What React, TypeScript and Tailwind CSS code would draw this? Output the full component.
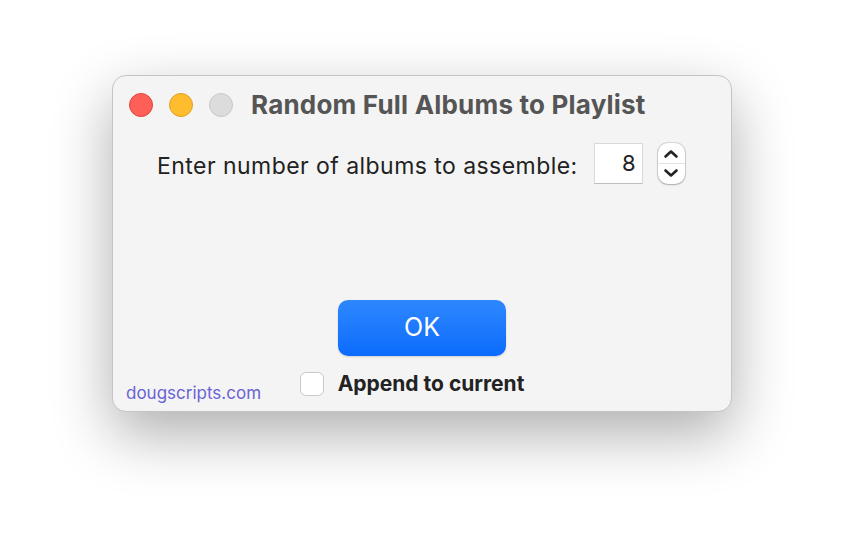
const font = { fontFamily: '"Inter", "Liberation Sans", sans-serif' };

function TrafficLights() {
  return (
    <div className="flex items-center gap-4">
      <span className="h-6 w-6 rounded-full border border-[#e0443e] bg-[#fe5f57]" />
      <span className="h-6 w-6 rounded-full border border-[#dea123] bg-[#febc2e]" />
      <span className="h-6 w-6 rounded-full border border-[#c8c8c8] bg-[#dcdcdc]" />
    </div>
  );
}

// stepper arrow, flipped for down
function Caret({ down }: { down?: boolean }) {
  return (
    <svg width="16" height="10" viewBox="0 0 16 10" className={down ? "rotate-180" : ""}>
      <path d="M2.5 7.5 L8 2.5 L13.5 7.5" fill="none" stroke="#222" strokeWidth="2.6" strokeLinecap="round" strokeLinejoin="round" />
    </svg>
  );
}

export default function App() {
  return (
    <div className="flex h-[560px] w-[844px] justify-center bg-white pt-[75px]" style={font}>
      <div className="flex h-[337px] w-[620px] flex-col rounded-[14px] border border-[#c4c4c4] bg-[#f4f4f4] shadow-[0_22px_60px_rgba(0,0,0,0.32)]">
        <div className="flex h-[56px] items-center pl-[16px] pt-[1px]">
          <TrafficLights />
          <h1 className="ml-[18px] text-[26px] font-bold tracking-[0.2px] text-[#555555]">
            Random Full Albums to Playlist
          </h1>
        </div>

        <div className="mt-[11px] flex items-center pl-[44px]">
          <span className="pt-[6px] text-[23px] tracking-[0.45px] text-[#222222]">Enter number of albums to assemble:</span>
          <div className="ml-[16px] flex h-[41px] w-[49px] items-center justify-end border border-[#d9d9d9] border-b-[#bdbdbd] bg-white pr-[6px] text-[22px] text-[#222222]">
            8
          </div>
          <div className="ml-[15px] flex h-[41px] w-[27px] flex-col items-center justify-center gap-[4px] rounded-[10px] bg-white shadow-[0_0_0_1px_rgba(0,0,0,0.12),0_1px_2px_rgba(0,0,0,0.2)]">
            <Caret />
            <span className="h-px w-full bg-[#e2e2e2]" />
            <Caret down />
          </div>
        </div>

        <div className="mt-[116px] flex justify-center">
          <button className="flex h-[56px] w-[168px] items-center justify-center rounded-[10px] bg-gradient-to-b from-[#2d88fd] to-[#0a6bfd] text-[25px] text-white shadow-[0_1px_2px_rgba(0,0,0,0.15)]">
            OK
          </button>
        </div>

        <div className="relative mt-[12px] flex justify-center">
          <label className="mr-[20px] flex items-center">
            <span className="h-6 w-6 rounded-[6px] border border-[#c9c9c9] bg-white" />
            <span className="ml-[14px] text-[21px] font-bold text-[#222222]">Append to current</span>
          </label>
          <span className="absolute left-[13px] top-[13px] text-[17px] text-[#6a62d4]">dougscripts.com</span>
        </div>
      </div>
    </div>
  );
}
